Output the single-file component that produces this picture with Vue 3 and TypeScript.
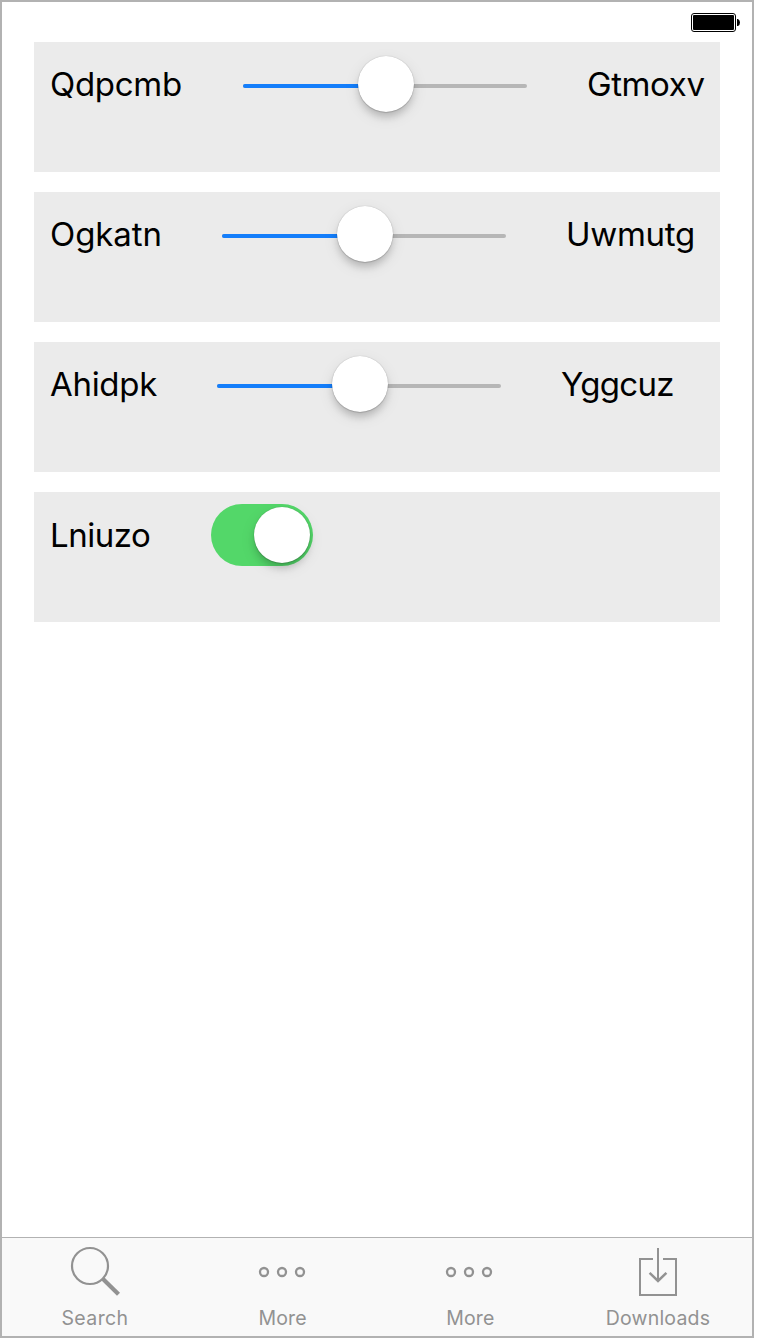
<script setup lang="ts">
import { ref } from 'vue'

interface SliderRow {
  before: string
  after: string
  value: number
  width: number
  beforeSpacing: number
  afterSpacing: number
}

const sliders = ref<SliderRow[]>([
  { before: 'Qdpcmb', after: 'Gtmoxv', value: 50, width: 133, beforeSpacing: -0.3, afterSpacing: -0.4 },
  { before: 'Ogkatn', after: 'Uwmutg', value: 50, width: 112, beforeSpacing: -0.1, afterSpacing: -0.3 },
  { before: 'Ahidpk', after: 'Yggcuz', value: 50, width: 107, beforeSpacing: -0.3, afterSpacing: -0.7 },
])
const enabled = ref(true)

const tabs = [
  { label: 'Search', icon: 'search', spacing: 0.4 },
  { label: 'More', icon: 'more', spacing: 0.1 },
  { label: 'More', icon: 'more', spacing: 0.1 },
  { label: 'Downloads', icon: 'downloads', spacing: 0.2 },
]
</script>

<template>
  <div class="phone">
    <header class="status">
      <svg class="battery" width="50" height="20" viewBox="0 0 50 20">
        <rect x="0.5" y="0.5" width="44" height="18" rx="2.5" fill="#fff" stroke="#000" />
        <rect x="2" y="2" width="41" height="15" rx="1" fill="#000" />
        <path d="M46 6h1q2 1 2 3.5T47 13h-1z" fill="#000" />
      </svg>
    </header>

    <main class="rows">
      <section v-for="row in sliders" :key="row.before" class="row">
        <span class="label" :style="{ width: row.width + 'px', letterSpacing: row.beforeSpacing + 'px' }">{{ row.before }}</span>
        <div class="slider">
          <div class="track"><div class="fill" :style="{ width: row.value + '%' }"></div></div>
          <div class="thumb slider-thumb" :style="{ left: `calc(${row.value}% - 27px)` }"></div>
        </div>
        <span class="label" :style="{ letterSpacing: row.afterSpacing + 'px' }">{{ row.after }}</span>
      </section>
      <section class="row">
        <span class="label switch-label">Lniuzo</span>
        <div class="switch" :class="{ on: enabled }" @click="enabled = !enabled"><div class="thumb"></div></div>
      </section>
    </main>

    <nav class="tabs">
      <a v-for="(tab, i) in tabs" :key="i" class="tab" :class="tab.icon">
        <svg class="icon" width="52" height="52" viewBox="0 0 52 52" fill="none" stroke="#929292">
          <template v-if="tab.icon === 'search'">
            <circle cx="21" cy="20" r="18" stroke-width="2.2" />
            <path d="M34 33L49.500 48.300" stroke-width="4.200" />
          </template>
          <template v-else-if="tab.icon === 'more'">
            <circle v-for="x in [7, 25, 43]" :key="x" :cx="x" cy="26" r="4" stroke-width="2.3" />
          </template>
          <template v-else>
            <path d="M21 13H8v36h36V13H31" stroke-width="2" />
            <path d="M26 2v33" stroke-width="2" />
            <path d="M17.600 26.800L26 35l8.400-8.200" stroke-width="2.5" />
          </template>
        </svg>
        <span class="tab-label" :style="{ letterSpacing: tab.spacing + 'px' }">{{ tab.label }}</span>
      </a>
    </nav>
  </div>
</template>

<style>
body {
  background: #fff;
}
</style>

<style scoped>
.phone {
  box-sizing: border-box;
  width: 754px;
  height: 1338px;
  border: 2px solid #b2b2b2;
  background: #fff;
  display: flex;
  flex-direction: column;
  font-family: Inter, "Liberation Sans", sans-serif;
  overflow: hidden;
}
.status {
  box-sizing: border-box;
  height: 40px;
  padding: 11px 11px 0 0;
  display: flex;
  justify-content: flex-end;
}
.battery {
  display: block;
}
.rows {
  flex: 1;
  display: flex;
  flex-direction: column;
  gap: 20px;
  padding: 0 32px;
}
.row {
  box-sizing: border-box;
  height: 130px;
  background: #ebebeb;
  display: flex;
  align-items: flex-start;
  gap: 60px;
  padding: 12px 0 0 16px;
}
.label {
  flex: none;
  font-size: 33px;
  font-weight: 400;
  line-height: 40px;
  padding-top: 10px;
  color: #000;
  white-space: nowrap;
}
.switch-label {
  width: 101px;
  padding-top: 11px;
  letter-spacing: -0.5px;
}
.slider {
  flex: none;
  position: relative;
  width: 284px;
  height: 60px;
  display: flex;
  align-items: center;
}
.track {
  width: 284px;
  height: 4px;
  margin-top: 4px;
  border-radius: 2px;
  background: #b6b6b6;
  overflow: hidden;
}
.fill {
  height: 4px;
  background: #147efb;
}
.thumb {
  width: 56px;
  height: 56px;
  border-radius: 50%;
  background: #fff;
  box-shadow: 0 0 1px rgba(0, 0, 0, 0.3), 0 1px 1px rgba(0, 0, 0, 0.12), 0 6px 7px -1px rgba(0, 0, 0, 0.16), 0 5px 16px rgba(0, 0, 0, 0.09);
}
.slider-thumb {
  position: absolute;
  top: 2px;
}
.switch {
  box-sizing: border-box;
  flex: none;
  width: 102px;
  height: 62px;
  padding: 3px;
  border-radius: 31px;
  background: #d5d5d5;
  display: flex;
}
.switch.on {
  justify-content: flex-end;
  background: #53d769;
}
.tabs {
  box-sizing: border-box;
  flex: none;
  height: 99px;
  border-top: 1px solid #b2b2b2;
  background: #f9f9f9;
  display: grid;
  grid-template-columns: 180px 180px 180px 180px;
  column-gap: 7.667px;
  padding-left: 3px;
}
.tab {
  display: flex;
  flex-direction: column;
  align-items: center;
  padding-top: 8px;
}
.icon {
  display: block;
}
.tab-label {
  margin-top: 8px;
  font-size: 19.5px;
  font-weight: 400;
  line-height: 24px;
  color: #929292;
}
</style>
